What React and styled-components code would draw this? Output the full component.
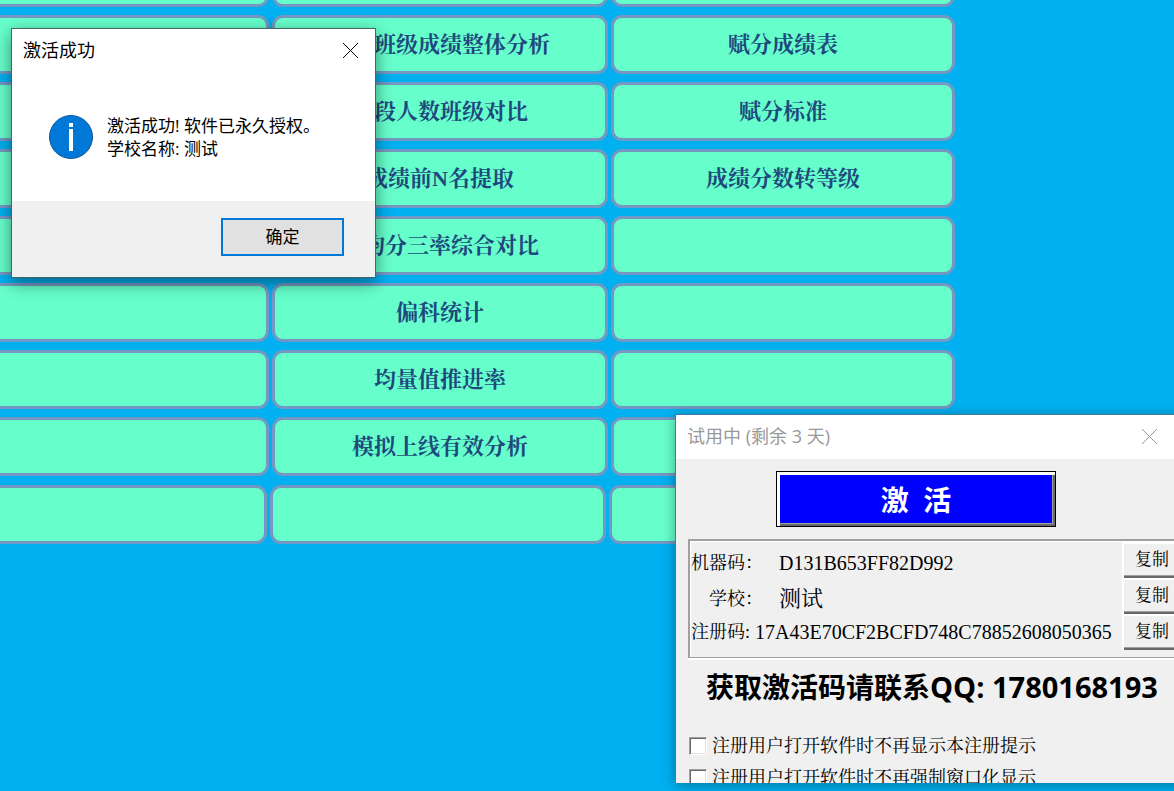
import React, { useState } from 'react'
import styled, { createGlobalStyle } from 'styled-components'

const GlobalStyle = createGlobalStyle`
  * {
    box-sizing: border-box;
  }
  body {
    margin: 0;
    background: #00b0f0;
  }
  button, input {
    font: inherit;
    color: inherit;
    margin: 0;
  }
`;

const sans = '"Open Sans", "Noto Sans CJK SC", sans-serif';
const song = '"Liberation Serif", "Noto Serif CJK SC", "Noto Sans CJK SC", serif';

const Page = styled.main`
  position: relative;
  height: 100vh;
  overflow: hidden;
  background: #00b0f0;
  font-family: ${sans};
`;

/* the menu is scrolled a little, so the first row is only partly in view */
const Menu = styled.nav`
  display: flex;
  flex-direction: column;
  gap: 8px;
  margin-top: -52px;
  margin-right: 219px;
`;

const MenuRow = styled.div`
  display: grid;
  grid-template-columns: 269fr 336fr 344fr;
  column-gap: 3px;
  margin: ${({ $last }) => ($last ? '1px 2px 0 -2px' : '0')};
`;

const MenuButton = styled.button`
  height: 59px;
  padding: 0;
  border: 3px solid #7598c2;
  border-radius: 11px;
  background: #66ffcc;
  color: #1f497d;
  font-family: ${song};
  font-size: 22px;
  font-weight: bold;
  line-height: 30px;
  white-space: nowrap;

  &:first-child {
    border-left: 0;
    border-top-left-radius: 0;
    border-bottom-left-radius: 0;
  }
`;

const Window = styled.section`
  position: absolute;
  display: flex;
  flex-direction: column;
  background: #f0f0f0;
  color: #000;
  overflow: hidden;
`;

const MessageWindow = styled(Window)`
  left: 11px;
  top: 28px;
  width: 365px;
  border: 1px solid #3f6866;
  box-shadow: 0 5px 16px rgba(0, 0, 0, 0.45);
`;

const TrialWindow = styled(Window)`
  right: -22px;
  bottom: 8px;
  width: 521px;
  height: 369px;
  border: 1px solid #3b7f9c;
  border-bottom: 0;
  box-shadow: 0 2px 12px rgba(0, 0, 0, 0.35);
`;

const TitleBar = styled.header`
  display: flex;
  flex: none;
  align-items: center;
  justify-content: space-between;
  height: 44px;
  padding: 0 ${({ $inactive }) => ($inactive ? 37 : 16)}px 2px 11px;
  background: #fff;
  color: ${({ $inactive }) => ($inactive ? '#999' : '#000')};
`;

const Title = styled.h1`
  margin: 0;
  font-size: 18px;
  font-weight: 400;
  line-height: 24px;
`;

const CloseButton = styled.button`
  display: flex;
  padding: 0;
  border: 0;
  background: none;
`;

const MessageBody = styled.div`
  display: flex;
  align-items: center;
  gap: 14px;
  height: 128px;
  padding: 0 37px;
  background: #fff;
`;

const MessageText = styled.p`
  margin: 0;
  font-size: 17px;
  line-height: 23px;
  white-space: nowrap;
`;

const MessageFooter = styled.footer`
  display: flex;
  justify-content: flex-end;
  padding: 17px 31px 21px;
`;

const OkButton = styled.button`
  width: 123px;
  height: 38px;
  padding: 0;
  border: 2px solid #0078d7;
  background: #e1e1e1;
  font-size: 17px;
  line-height: 24px;
`;

const TrialBody = styled.div`
  display: flex;
  flex-direction: column;
  padding: 12px 0 0 12px;
`;

const ActivateButton = styled.button`
  width: 280px;
  height: 56px;
  margin-left: 88px;
  padding: 2px 0 0;
  border: 1px solid #000;
  background: #00f;
  box-shadow: inset 3px 3px 0 #fff, inset -2px -2px 0 #696969, inset -3px -3px 0 #a0a0a0;
  color: #fff;
  font-size: 28px;
  font-weight: bold;
  line-height: 36px;
  white-space: pre;
`;

const CodeBox = styled.div`
  display: flex;
  flex-direction: column;
  height: 119px;
  margin-top: 12px;
  padding: 1px 0 0 1px;
  border: 2px solid #a0a0a0;
  border-bottom-width: 1px;
  box-shadow: inset 1px 1px 0 #fff, 0 2px 0 #fff;
  font-family: ${song};
`;

const CodeRow = styled.div`
  display: flex;
  align-items: center;
  height: 36px;
`;

const CodeText = styled.div`
  display: flex;
  flex: 1;
  align-items: center;
  gap: ${({ $tight }) => ($tight ? 0 : 16)}px;
  padding-top: ${({ $tight }) => ($tight ? 0 : 6)}px;
  white-space: nowrap;
`;

const CodeLabel = styled.label`
  width: ${({ $tight }) => ($tight ? 64 : 72)}px;
  font-size: 18px;
  line-height: 24px;
  text-align: ${({ $tight }) => ($tight ? 'left' : 'right')};
`;

const CodeValue = styled.output`
  font-size: ${({ $large }) => ($large ? 22 : 20)}px;
  line-height: 28px;
`;

const CopyButton = styled.button`
  width: 71px;
  height: 36px;
  padding: 0 0 0 13px;
  border: 0;
  background: #f0f0f0;
  box-shadow: inset 2px 2px 0 #fff, inset 0 -2px 0 #696969, inset 0 -3px 0 #a0a0a0;
  font-size: 17px;
  line-height: 24px;
  text-align: left;
`;

const Contact = styled.p`
  margin: 9px 0 0 18px;
  font-size: 28px;
  font-weight: bold;
  line-height: 40px;
  white-space: nowrap;
`;

const ContactNumber = styled.span`
  font-size: 29px;
`;

const Options = styled.div`
  display: flex;
  flex-direction: column;
  gap: 8px;
  margin-top: 27px;
  padding-left: 1px;
`;

const Option = styled.label`
  display: flex;
  align-items: center;
  gap: 5px;
  font-family: ${song};
  font-size: 18px;
  line-height: 24px;
  white-space: nowrap;
`;

const CheckBox = styled.input`
  appearance: none;
  width: 18px;
  height: 18px;
  border: 1px solid;
  border-color: #a0a0a0 #fff #fff #a0a0a0;
  background: #fff;
  box-shadow: inset 1px 1px 0 #696969, inset -1px -1px 0 #e3e3e3;

  &:checked {
    background: #696969;
  }
`;

const CloseIcon = () => (
  <svg width="17" height="17" viewBox="0 0 17 17" fill="none" stroke="currentColor">
    <path d="M1 1L16 16M16 1L1 16" />
  </svg>
)

const InfoIcon = () => (
  <svg width="44" height="44" viewBox="0 0 44 44">
    <circle cx="22" cy="22" r="21.5" fill="#0078d7" stroke="#0f5a9c" />
    <path d="M20 8h4v4h-4zM20 14h4v22h-4z" fill="#fff" />
  </svg>
)

const menuRows = [
  ['', '', ''],
  ['', '年级班级成绩整体分析', '赋分成绩表'],
  ['', '分段人数班级对比', '赋分标准'],
  ['', '成绩前N名提取', '成绩分数转等级'],
  ['', '平均分三率综合对比', ''],
  ['', '偏科统计', ''],
  ['', '均量值推进率', ''],
  ['', '模拟上线有效分析', ''],
  ['', '', ''],
];

// the registration code is long, so its row is set tight
const codes = [
  { id: 'machine', label: '机器码：', value: 'D131B653FF82D992' },
  { id: 'school', label: '学校：', value: '测试', large: true },
  { id: 'register', label: '注册码:', value: '17A43E70CF2BCFD748C78852608050365', tight: true },
];

const options = [
  '注册用户打开软件时不再显示本注册提示',
  '注册用户打开软件时不再强制窗口化显示',
];

const App = () => {
  const [message, setMessage] = useState(true);
  const [trial, setTrial] = useState(true);

  const closeMessage = () => setMessage(false);
  const copy = (text) => navigator.clipboard?.writeText(text);

  return (
    <>
      <GlobalStyle />
      <Page>
        <Menu>
          {menuRows.map((row, r) => (
            <MenuRow key={r} $last={r === menuRows.length - 1}>
              {row.map((name, c) => <MenuButton key={c}>{name}</MenuButton>)}
            </MenuRow>
          ))}
        </Menu>

        {trial && (
          <TrialWindow>
            <TitleBar $inactive>
              <Title>试用中 (剩余 3 天)</Title>
              <CloseButton aria-label="关闭" onClick={() => setTrial(false)}><CloseIcon /></CloseButton>
            </TitleBar>
            <TrialBody>
              <ActivateButton onClick={() => setMessage(true)}>激  活</ActivateButton>
              <CodeBox>
                {codes.map(({ id, label, value, tight, large }) => (
                  <CodeRow key={id}>
                    <CodeText $tight={tight}>
                      <CodeLabel htmlFor={id} $tight={tight}>{label}</CodeLabel>
                      <CodeValue id={id} $large={large}>{value}</CodeValue>
                    </CodeText>
                    <CopyButton onClick={() => copy(value)}>复制</CopyButton>
                  </CodeRow>
                ))}
              </CodeBox>
              <Contact>获取激活码请联系<ContactNumber>QQ: 1780168193</ContactNumber></Contact>
              <Options>
                {options.map((text) => (
                  <Option key={text}>
                    <CheckBox type="checkbox" />
                    {text}
                  </Option>
                ))}
              </Options>
            </TrialBody>
          </TrialWindow>
        )}

        {message && (
          <MessageWindow role="dialog">
            <TitleBar>
              <Title>激活成功</Title>
              <CloseButton aria-label="关闭" onClick={closeMessage}><CloseIcon /></CloseButton>
            </TitleBar>
            <MessageBody>
              <InfoIcon />
              <MessageText>
                激活成功! 软件已永久授权。<br />
                学校名称: 测试
              </MessageText>
            </MessageBody>
            <MessageFooter>
              <OkButton onClick={closeMessage}>确定</OkButton>
            </MessageFooter>
          </MessageWindow>
        )}
      </Page>
    </>
  )
}

export default App
